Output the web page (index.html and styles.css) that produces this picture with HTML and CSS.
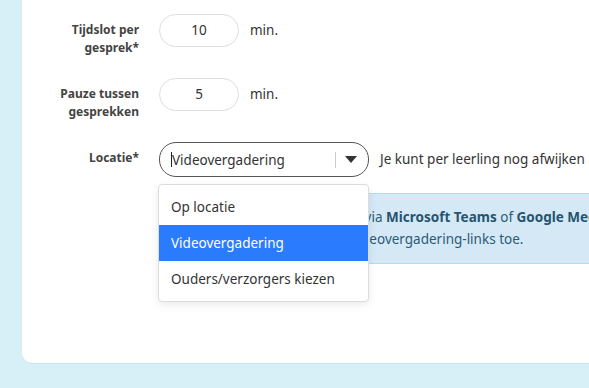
FILE: index.html
```html
<!DOCTYPE html>
<html lang="nl">
<head>
<meta charset="utf-8">
<link rel="stylesheet" href="styles.css">
</head>
<body>
<div class="card">
  <div class="row">
    <label class="label">Tijdslot per<br>gesprek*</label>
    <div class="field"><div class="input">10</div></div>
    <span class="unit">min.</span>
  </div>
  <div class="row">
    <label class="label">Pauze tussen<br>gesprekken</label>
    <div class="field"><div class="input">5</div></div>
    <span class="unit">min.</span>
  </div>
  <div class="row row-select">
    <label class="label">Locatie*</label>
    <div class="select">
      <span class="caret"></span><span class="select-text">Videovergadering</span>
      <span class="sep"></span>
      <svg class="arrow" width="12" height="7" viewBox="0 0 12 7"><path d="M0 0H12L6 7Z" fill="#333"/></svg>
    </div>
    <span class="hint">Je kunt per leerling nog afwijken</span>
  </div>
  <div class="info">
    <p>Ouders krijgen een uitnodigin via <b>Microsoft Teams</b> of <b>Google Meet</b>.</p>
    <p>Voeg na het plannen zelf de videovergadering-links toe.</p>
  </div>
  <ul class="dropdown">
    <li>Op locatie</li>
    <li class="active">Videovergadering</li>
    <li>Ouders/verzorgers kiezen</li>
  </ul>
</div>
</body>
</html>
```
FILE: styles.css
```css
html, body {
  margin: 0;
  padding: 0;
}
body {
  background: #d7eff6;
  width: 589px;
  height: 388px;
  overflow: hidden;
  font-family: "Noto Sans", "Open Sans", sans-serif;
  color: #333;
}
.card {
  position: relative;
  margin-left: 22px;
  width: 620px;
  height: 363px;
  background: #fff;
  border-radius: 0 0 0 10px;
  box-shadow: 0 1px 0 #c9e4ee;
  padding-top: 14px;
  box-sizing: border-box;
  overflow: hidden;
}
.row {
  display: grid;
  grid-template-columns: 117px 80px auto;
  column-gap: 20px;
  align-items: start;
  height: 64px;
}
.label {
  text-align: right;
  font-size: 12px;
  font-weight: 700;
  line-height: 18px;
  color: #444;
  padding-top: 7px;
}
.input {
  box-sizing: border-box;
  height: 33px;
  border: 1px solid #dedede;
  border-radius: 17px;
  font-size: 13.5px;
  line-height: 31px;
  text-align: center;
  color: #333;
}
.unit {
  font-size: 13.5px;
  line-height: 33px;
  margin-left: -9px;
  color: #333;
}
.row-select {
  grid-template-columns: 117px 210px auto;
  height: auto;
}
.select {
  box-sizing: border-box;
  height: 35px;
  border: 1px solid #555;
  border-radius: 17px;
  display: flex;
  align-items: center;
  padding-left: 11px;
  font-size: 13.5px;
  color: #333;
}
.caret {
  width: 1px;
  height: 15px;
  background: #222;
}
.select-text {
  flex: 1;
}
.sep {
  width: 1px;
  height: 16px;
  background: #ccc;
  margin-right: 9px;
}
.arrow {
  margin-right: 11px;
}
.hint {
  font-size: 13.5px;
  line-height: 35px;
  margin-left: -9px;
  white-space: nowrap;
  color: #333;
}
.info {
  margin: 16px 0 0 137px;
  background: #d4e9f5;
  border-top: 1px solid #b4dcea;
  border-bottom: 1px solid #b4dcea;
  padding: 12px 12px 13px;
  font-size: 13.5px;
  line-height: 22px;
  color: #2d5a76;
  white-space: nowrap;
}
.info p {
  margin: 0;
}
.info b {
  font-weight: 700;
  color: #265470;
}
.dropdown {
  position: absolute;
  left: 136px;
  top: 184px;
  width: 211px;
  margin: 0;
  padding: 4px 0;
  list-style: none;
  background: #fff;
  border: 1px solid #dcdcdc;
  border-radius: 4px;
  box-shadow: 0 3px 8px rgba(0,0,0,0.08);
  box-sizing: border-box;
  font-size: 13.5px;
}
.dropdown li {
  height: 36px;
  line-height: 36px;
  padding-left: 12px;
  color: #333;
}
.dropdown li.active {
  background: #2a7bfd;
  color: #fff;
}
```
